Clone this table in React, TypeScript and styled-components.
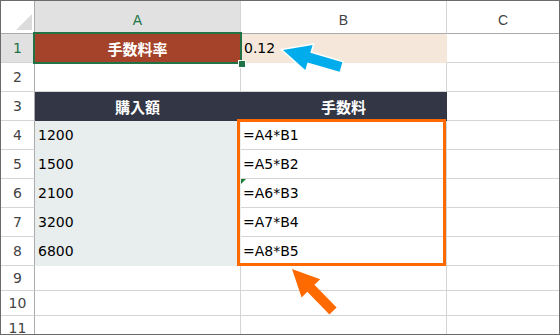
import React from "react";
import styled, { createGlobalStyle, css } from "styled-components";

const GlobalStyle = createGlobalStyle`
  html, body {
    margin: 0;
    padding: 0;
    background: #ffffff;
  }
`;

const GRID = "#d4d4d4";
const HEAD_LINE = "#ababab";
const EXCEL_GREEN = "#217346";
const ORANGE = "#ff6a00";

const LATIN = `"DejaVu Sans", "Noto Sans CJK JP", sans-serif`;
const JP = `"Noto Sans CJK JP", "DejaVu Sans", sans-serif`;

const Frame = styled.div`
  position: relative;
  width: 560px;
  height: 335px;
  box-sizing: border-box;
  border: 1px solid #6b6b6b;
  overflow: hidden;
  background: #ffffff;
`;

const Sheet = styled.div`
  display: grid;
  grid-template-columns: 34px 206px 206px 1fr;
  grid-template-rows: 33px repeat(8, 29px) repeat(3, 25px);
`;

const Corner = styled.div`
  position: relative;
  box-sizing: border-box;
  border-right: 1px solid ${HEAD_LINE};
  border-bottom: 1px solid ${HEAD_LINE};
  background: #ffffff;

  &::after {
    content: "";
    position: absolute;
    right: 2px;
    bottom: 3px;
    width: 16px;
    height: 16px;
    background: #dcdcdc;
    clip-path: polygon(100% 0, 100% 100%, 0 100%);
  }
`;

const ColHead = styled.div<{ $active?: boolean; $last?: boolean }>`
  box-sizing: border-box;
  display: flex;
  align-items: center;
  justify-content: center;
  padding-top: 5px;
  border-bottom: 1px solid ${HEAD_LINE};
  border-right: ${({ $last }) => ($last ? "none" : `1px solid ${GRID}`)};
  background: ${({ $active }) => ($active ? "#e1e1e1" : "#ffffff")};
  color: ${({ $active }) => ($active ? EXCEL_GREEN : "#444444")};
  font-family: "Liberation Sans", Arial, sans-serif;
  font-size: 14px;
`;

const RowHead = styled.div<{ $active?: boolean }>`
  box-sizing: border-box;
  display: flex;
  align-items: center;
  justify-content: center;
  border-right: 1px solid ${HEAD_LINE};
  border-bottom: 1px solid ${GRID};
  background: ${({ $active }) => ($active ? "#e1e1e1" : "#ffffff")};
  color: ${({ $active }) => ($active ? EXCEL_GREEN : "#444444")};
  font-family: ${LATIN};
  font-size: 14px;
`;

type Kind = "plain" | "title" | "rate" | "head" | "input" | "formula";

const kindStyles: Record<Kind, ReturnType<typeof css>> = {
  plain: css`
    background: #ffffff;
    border-color: ${GRID};
  `,
  title: css`
    background: #a5432a;
    border-color: #a5432a;
    color: #ffffff;
    font-family: ${JP};
    font-weight: 700;
    font-size: 15px;
    justify-content: center;
  `,
  rate: css`
    background: #f5e8da;
    border-color: #f5e8da;
    padding-left: 3px;
  `,
  head: css`
    background: #333645;
    border-color: #333645;
    color: #ffffff;
    font-family: ${JP};
    font-weight: 700;
    font-size: 15px;
    justify-content: center;
  `,
  input: css`
    background: #e8eded;
    border-color: #e8eded;
    padding-left: 3px;
  `,
  formula: css`
    background: #ffffff;
    border-color: ${GRID};
    padding-left: 2px;
  `,
};

const Cell = styled.div<{ $kind: Kind; $last?: boolean }>`
  position: relative;
  box-sizing: border-box;
  display: flex;
  align-items: center;
  border-right: 1px solid;
  border-bottom: 1px solid;
  color: #000000;
  font-family: ${LATIN};
  font-size: 14px;
  white-space: nowrap;
  ${({ $kind }) => kindStyles[$kind]}
  ${({ $last }) =>
    $last &&
    css`
      border-right: none;
    `}
`;

/* active-cell outline with its fill handle */
const Selection = styled.div`
  position: absolute;
  left: -2px;
  top: -2px;
  width: 209px;
  height: 32px;
  box-sizing: border-box;
  border: 2px solid ${EXCEL_GREEN};
  pointer-events: none;
  z-index: 2;
`;

const FillHandle = styled.div`
  position: absolute;
  right: -5px;
  bottom: -5px;
  width: 6px;
  height: 6px;
  background: ${EXCEL_GREEN};
  outline: 1px solid #ffffff;
`;

/* small green error marker in a cell's top-left corner */
const ErrorMark = styled.span`
  position: absolute;
  left: 0;
  top: 0;
  width: 5px;
  height: 5px;
  background: #1e7b34;
  clip-path: polygon(0 0, 100% 0, 0 100%);
`;

const Highlight = styled.div`
  position: absolute;
  left: 236px;
  top: 118px;
  width: 209px;
  height: 147px;
  box-sizing: border-box;
  border: 3px solid ${ORANGE};
  pointer-events: none;
  z-index: 3;
`;

const ArrowSvg = styled.svg<{ $left: number; $top: number }>`
  position: absolute;
  left: ${({ $left }) => $left - 1}px;
  top: ${({ $top }) => $top - 1}px;
  overflow: visible;
  z-index: 4;
`;

type Pt = [number, number];

function arrowPoints(tip: Pt, tail: Pt, head: number, halfHead: number, halfShaft: number): string {
  const dx = tail[0] - tip[0];
  const dy = tail[1] - tip[1];
  const len = Math.hypot(dx, dy);
  const bx = dx / len;
  const by = dy / len;
  const px = by;
  const py = -bx;
  const at = (along: number, side: number): string =>
    `${(tip[0] + bx * along + px * side).toFixed(1)},${(tip[1] + by * along + py * side).toFixed(1)}`;
  return [
    at(0, 0),
    at(head, halfHead),
    at(head, halfShaft),
    at(len, halfShaft),
    at(len, -halfShaft),
    at(head, -halfShaft),
    at(head, -halfHead),
  ].join(" ");
}

const Arrow: React.FC<{
  tip: Pt;
  tail: Pt;
  color: string;
  outline?: boolean;
  box: [number, number, number, number];
}> = ({ tip, tail, color, outline, box }) => {
  const [x, y, w, h] = box;
  return (
    <ArrowSvg $left={x} $top={y} width={w} height={h} viewBox={`${x} ${y} ${w} ${h}`}>
      <polygon
        points={arrowPoints(tip, tail, 27, 13, 5)}
        fill={color}
        stroke={outline ? "#ffffff" : "none"}
        strokeWidth={outline ? 3 : 0}
        strokeLinejoin="miter"
        paintOrder="stroke"
      />
    </ArrowSvg>
  );
};

type Row = {
  n: number;
  a?: { text: string; kind: Kind };
  b?: { text: string; kind: Kind };
};

const rows: Row[] = [
  { n: 1, a: { text: "手数料率", kind: "title" }, b: { text: "0.12", kind: "rate" } },
  { n: 2 },
  { n: 3, a: { text: "購入額", kind: "head" }, b: { text: "手数料", kind: "head" } },
  { n: 4, a: { text: "1200", kind: "input" }, b: { text: "=A4*B1", kind: "formula" } },
  { n: 5, a: { text: "1500", kind: "input" }, b: { text: "=A5*B2", kind: "formula" } },
  { n: 6, a: { text: "2100", kind: "input" }, b: { text: "=A6*B3", kind: "formula" } },
  { n: 7, a: { text: "3200", kind: "input" }, b: { text: "=A7*B4", kind: "formula" } },
  { n: 8, a: { text: "6800", kind: "input" }, b: { text: "=A8*B5", kind: "formula" } },
  { n: 9 },
  { n: 10 },
  { n: 11 },
];

export default function App() {
  return (
    <>
      <GlobalStyle />
      <Frame>
        <Sheet>
          <Corner />
          <ColHead $active>A</ColHead>
          <ColHead>B</ColHead>
          <ColHead $last>C</ColHead>

          {rows.map((row) => (
            <React.Fragment key={row.n}>
              <RowHead $active={row.n === 1}>{row.n}</RowHead>
              <Cell $kind={row.a?.kind ?? "plain"}>
                {row.a?.text}
                {row.n === 1 && (
                  <Selection>
                    <FillHandle />
                  </Selection>
                )}
              </Cell>
              <Cell $kind={row.b?.kind ?? "plain"}>
                {row.n === 6 && <ErrorMark />}
                {row.b?.text}
              </Cell>
              <Cell $kind="plain" $last />
            </React.Fragment>
          ))}
        </Sheet>

        <Highlight />
        <Arrow tip={[283, 50]} tail={[341, 67]} color="#00acec" outline box={[270, 38, 80, 42]} />
        <Arrow tip={[292, 269]} tail={[333, 311]} color={ORANGE} box={[282, 260, 62, 62]} />
      </Frame>
    </>
  );
}
